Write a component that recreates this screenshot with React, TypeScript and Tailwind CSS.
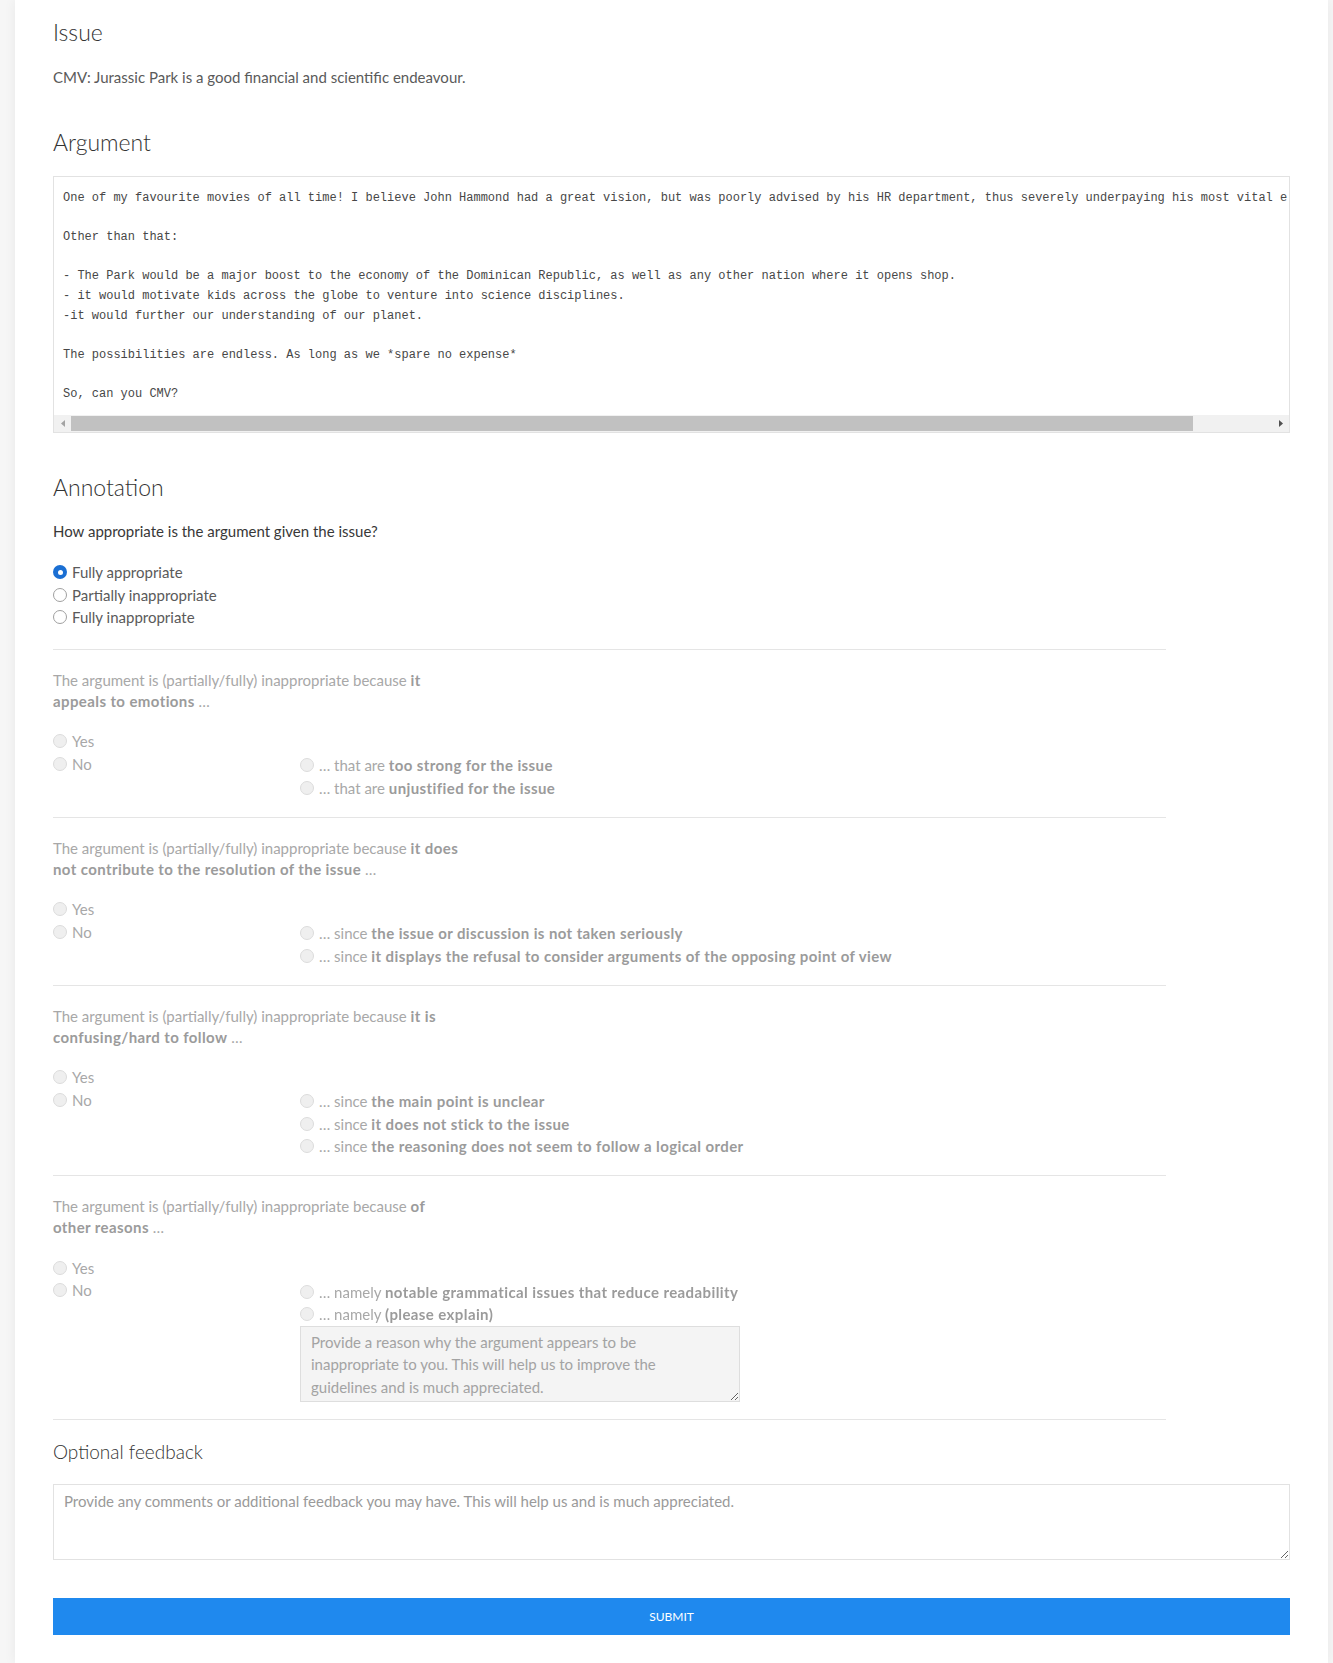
import type { ReactNode } from "react";

const ARGUMENT = `One of my favourite movies of all time! I believe John Hammond had a great vision, but was poorly advised by his HR department, thus severely underpaying his most vital e

Other than that:

- The Park would be a major boost to the economy of the Dominican Republic, as well as any other nation where it opens shop.
- it would motivate kids across the globe to venture into science disciplines.
-it would further our understanding of our planet.

The possibilities are endless. As long as we *spare no expense*

So, can you CMV?`;

type Reason = {
  line1: string;
  line2: string;
  subs: { lead: string; bold: string }[];
  explain?: boolean;
};

const REASONS: Reason[] = [
  {
    line1: "it",
    line2: "appeals to emotions",
    subs: [
      { lead: "that are", bold: "too strong for the issue" },
      { lead: "that are", bold: "unjustified for the issue" },
    ],
  },
  {
    line1: "it does",
    line2: "not contribute to the resolution of the issue",
    subs: [
      { lead: "since", bold: "the issue or discussion is not taken seriously" },
      {
        lead: "since",
        bold: "it displays the refusal to consider arguments of the opposing point of view",
      },
    ],
  },
  {
    line1: "it is",
    line2: "confusing/hard to follow",
    subs: [
      { lead: "since", bold: "the main point is unclear" },
      { lead: "since", bold: "it does not stick to the issue" },
      { lead: "since", bold: "the reasoning does not seem to follow a logical order" },
    ],
  },
  {
    line1: "of",
    line2: "other reasons",
    subs: [
      { lead: "namely", bold: "notable grammatical issues that reduce readability" },
      { lead: "namely", bold: "(please explain)" },
    ],
    explain: true,
  },
];

function Radio({ checked = false, disabled = false }: { checked?: boolean; disabled?: boolean }) {
  if (checked) {
    return (
      <span className="flex h-[14px] w-[14px] shrink-0 items-center justify-center rounded-full bg-[#1b6fd3]">
        <span className="h-[5px] w-[5px] rounded-full bg-white" />
      </span>
    );
  }
  return (
    <span
      className={
        disabled
          ? "h-[14px] w-[14px] shrink-0 rounded-full border border-[#dcdcdc] bg-[#efefef]"
          : "h-[14px] w-[14px] shrink-0 rounded-full border border-[#a0a0a0] bg-white"
      }
    />
  );
}

function Option({
  children,
  checked,
  disabled,
}: {
  children: ReactNode;
  checked?: boolean;
  disabled?: boolean;
}) {
  return (
    <label className="flex h-[22.5px] items-center gap-[5px] whitespace-nowrap">
      <Radio checked={checked} disabled={disabled} />
      <span>{children}</span>
    </label>
  );
}

function Heading({ children, small }: { children: ReactNode; small?: boolean }) {
  return (
    <h2
      className={
        small
          ? "text-[19px] leading-[28px] font-light text-[#333]"
          : "text-[23px] leading-[28px] font-light text-[#333]"
      }
    >
      {children}
    </h2>
  );
}

function Strong({ children }: { children: ReactNode }) {
  return <b className="font-bold tracking-[0.4px] text-[#9b9b9b]">{children}</b>;
}

function ReasonBlock({ reason }: { reason: Reason }) {
  return (
    <section className="border-t border-[#e5e5e5] pt-[20px] pb-[17.5px] text-[#a8a8a8]">
      <p className="text-[15px] leading-[21px]">
        The argument is (partially/fully) inappropriate because <Strong>{reason.line1}</Strong>
        <br />
        <Strong>{reason.line2}</Strong> …
      </p>

      <div className="mt-[18.5px] flex text-[15px]">
        <div className="w-[247px] shrink-0">
          <Option disabled>Yes</Option>
          <Option disabled>No</Option>
        </div>
        <div className="pt-[24px]">
          {reason.subs.map((s) => (
            <Option key={s.bold} disabled>
              … {s.lead} <Strong>{s.bold}</Strong>
            </Option>
          ))}
          {reason.explain && (
            <textarea
              disabled
              placeholder={
                "Provide a reason why the argument appears to be\ninappropriate to you. This will help us to improve the\nguidelines and is much appreciated."
              }
              className="block h-[76px] w-[440px] border border-[#dedede] bg-[#f4f4f4] px-[10px] py-[4px] text-[15px] leading-[22.5px] text-[#999] placeholder:text-[#a3a3a3]"
            />
          )}
        </div>
      </div>
    </section>
  );
}

export default function App() {
  return (
    <div
      className="min-h-screen bg-[#f6f6f6] pr-[5px] pl-[15px]"
      style={{ fontFamily: "Lato, 'Open Sans', sans-serif" }}
    >
      <main className="bg-white px-[38px] pt-[18px] pb-[28px] shadow-[0_0_12px_rgba(0,0,0,0.06)]">
        <Heading>Issue</Heading>
        <p className="mt-[20px] text-[15px] leading-[22.5px] text-[#5a5a5a]">
          CMV: Jurassic Park is a good financial and scientific endeavour.
        </p>

        <div className="mt-[39.5px]">
          <Heading>Argument</Heading>
        </div>
        <div className="mt-[20px] border border-[#e2e2e2] bg-white">
          <pre
            className="overflow-hidden px-[9px] pt-[12px] pb-[10px] text-[12px] leading-[19.6px] text-[#474747]"
            style={{ fontFamily: "'Liberation Mono', 'DejaVu Sans Mono', monospace" }}
          >
            {ARGUMENT}
          </pre>
          <div className="flex h-[17px] items-center bg-[#f1f1f1]">
            <div className="flex h-full w-[17px] items-center justify-center">
              <svg width="4" height="7" viewBox="0 0 4 7">
                <polygon points="4,0 0,3.5 4,7" fill="#a3a3a3" />
              </svg>
            </div>
            <div className="h-[15px] w-[1122px] bg-[#c1c1c1]" />
            <div className="flex-1" />
            <div className="flex h-full w-[17px] items-center justify-center">
              <svg width="4" height="7" viewBox="0 0 4 7">
                <polygon points="0,0 4,3.5 0,7" fill="#505050" />
              </svg>
            </div>
          </div>
        </div>

        <div className="mt-[40px]">
          <Heading>Annotation</Heading>
        </div>
        <p className="mt-[19px] text-[15px] leading-[22.5px] text-[#383838]">
          How appropriate is the argument given the issue?
        </p>
        <div className="mt-[19px] mb-[20px] text-[15px] text-[#5a5a5a]">
          <Option checked>Fully appropriate</Option>
          <Option>Partially inappropriate</Option>
          <Option>Fully inappropriate</Option>
        </div>

        <div className="w-[90%] border-b border-[#e5e5e5]">
          {REASONS.map((r) => (
            <ReasonBlock key={r.line2} reason={r} />
          ))}
        </div>

        <div className="mt-[18px]">
          <Heading small>Optional feedback</Heading>
        </div>
        <textarea
          placeholder="Provide any comments or additional feedback you may have. This will help us and is much appreciated."
          className="mt-[18px] block h-[76px] w-full border border-[#e2e2e2] px-[10px] py-[5px] text-[15px] leading-[22.5px] text-[#333] placeholder:text-[#9a9a9a]"
        />

        <button className="mt-[38px] block h-[37px] w-full bg-[#1f89ee] text-[12px] text-white">
          SUBMIT
        </button>
      </main>
    </div>
  );
}
